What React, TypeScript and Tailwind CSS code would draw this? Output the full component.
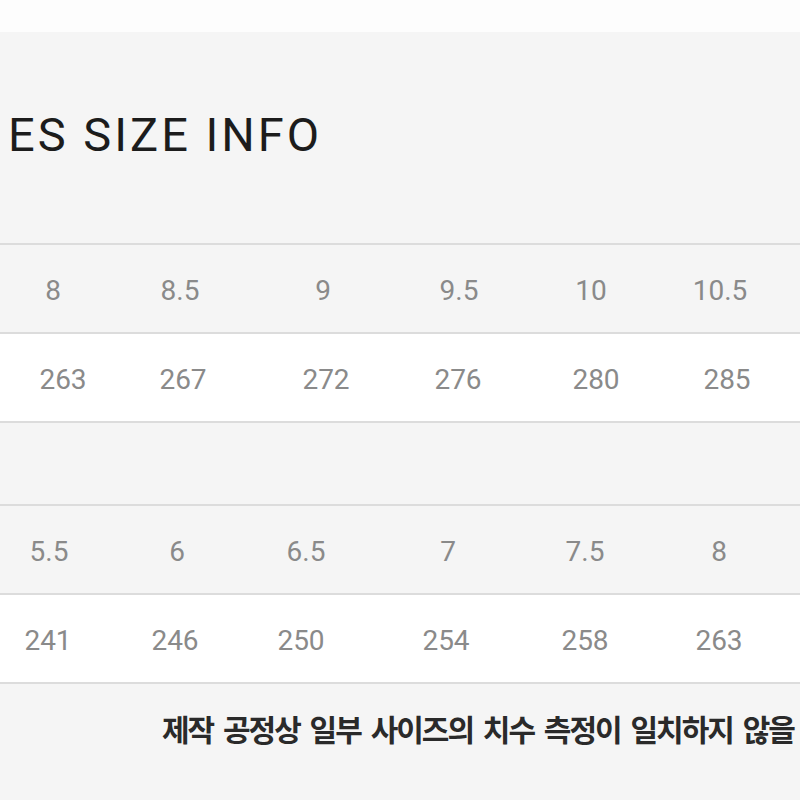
const rows = [
  {
    bg: 'bg-[#f5f5f5]',
    cols: 'grid-cols-[106px_148px_138px_134px_130px_128px]',
    values: ['8', '8.5', '9', '9.5', '10', '10.5'],
  },
  {
    bg: 'bg-white',
    cols: 'grid-cols-[126px_114px_172px_92px_184px_78px]',
    values: ['263', '267', '272', '276', '280', '285'],
  },
]

const rows2 = [
  {
    bg: 'bg-[#f5f5f5]',
    cols: 'grid-cols-[98px_158px_100px_184px_90px_178px]',
    values: ['5.5', '6', '6.5', '7', '7.5', '8'],
  },
  {
    bg: 'bg-white',
    cols: 'grid-cols-[96px_158px_94px_196px_82px_186px]',
    values: ['241', '246', '250', '254', '258', '263'],
  },
]

function SizeRow({ bg, cols, values }: { bg: string; cols: string; values: string[] }) {
  return (
    <div className={`h-[89px] border-b-2 border-[#dcdcdc] grid items-center ${bg} ${cols}`}>
      {values.map((v, i) => (
        <span key={i} className="text-center text-[28px] text-[#8a8a8a] pt-[4px]">
          {v}
        </span>
      ))}
    </div>
  )
}

export default function App() {
  return (
    <div className="w-[800px] h-[800px] overflow-hidden bg-[#f5f5f5] font-['Roboto','Liberation_Sans',sans-serif]">
      <div className="h-[32px] bg-[#fdfdfd]" />
      <div className="h-[213px] border-b-2 border-[#dcdcdc] flex items-center pl-[8px] pb-[6px]">
        <h1 className="text-[47px] leading-none tracking-[3px] text-[#1c1c1c] whitespace-nowrap">ES SIZE INFO</h1>
      </div>
      {rows.map((r, i) => (
        <SizeRow key={i} {...r} />
      ))}
      <div className="h-[83px] border-b-2 border-[#dcdcdc]" />
      {rows2.map((r, i) => (
        <SizeRow key={i} {...r} />
      ))}
      <div className="h-[88px] flex items-center pl-[162px] whitespace-nowrap">
        <p className="text-[30px] leading-none font-bold text-[#2a2a2a] tracking-[-2px] [word-spacing:5px] font-['Noto_Sans_CJK_KR','Noto_Sans',sans-serif]">
          제작 공정상 일부 사이즈의 치수 측정이 일치하지 않을
        </p>
      </div>
    </div>
  )
}
